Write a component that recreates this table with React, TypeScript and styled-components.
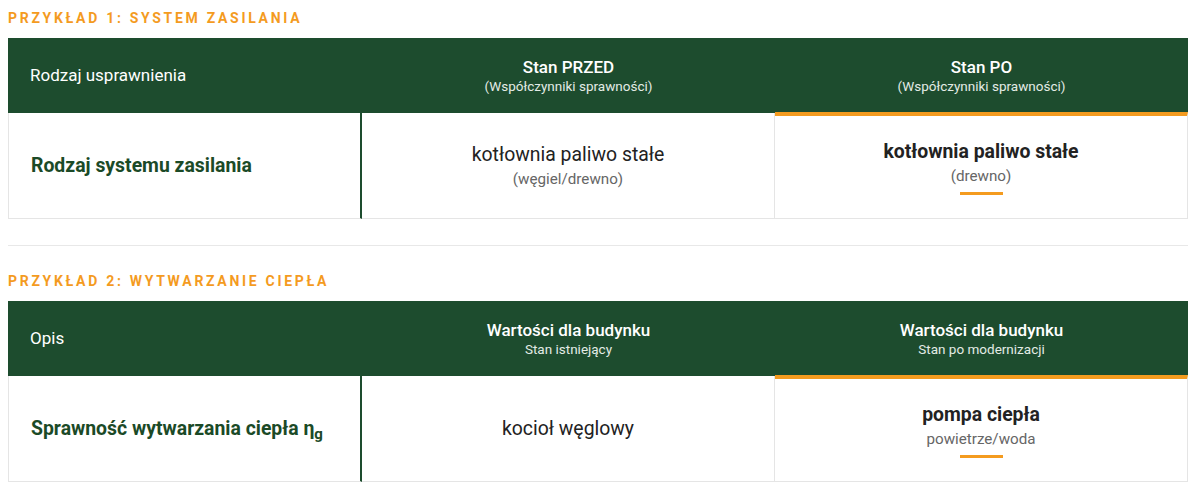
import React from 'react'
import styled, { createGlobalStyle } from 'styled-components'

const GREEN = '#1d4c2e'
const ORANGE = '#f49b1f'

const GlobalStyle = createGlobalStyle`
  html, body {
    margin: 0;
    padding: 0;
    background: #fff;
    font-family: Roboto, 'Liberation Sans', sans-serif;
  }
`

const Page = styled.div`
  width: 1180px;
  padding: 10px 12px 0 8px;
`

const Section = styled.section``

const Title = styled.h3`
  margin: 0 0 12px;
  font-size: 14px;
  line-height: 16px;
  font-weight: 700;
  letter-spacing: 2.7px;
  text-transform: uppercase;
  color: ${ORANGE};
`

const Divider = styled.hr`
  margin: 26px 0 27px;
  border: 0;
  border-top: 1px solid #e8e8e8;
`

const Table = styled.div`
  display: grid;
  grid-template-columns: 30% 35% 35%;
`

const HeadCell = styled.div<{ $align?: 'left' | 'center' }>`
  height: 75px;
  background: ${GREEN};
  color: #fff;
  display: flex;
  flex-direction: column;
  justify-content: center;
  align-items: ${p => (p.$align === 'left' ? 'flex-start' : 'center')};
  padding: ${p => (p.$align === 'left' ? '0 0 0 22px' : '0')};
  box-sizing: border-box;
`

const HeadLabel = styled.div<{ $plain?: boolean }>`
  font-size: 17px;
  line-height: 21px;
  font-weight: ${p => (p.$plain ? 400 : 500)};
`

const HeadSub = styled.div`
  font-size: 13.5px;
  line-height: 17px;
  color: #e3ebe5;
`

const BodyCell = styled.div<{ $variant: 'label' | 'before' | 'after' }>`
  height: ${p => (p.$variant === 'after' ? '107px' : '106px')};
  margin-top: ${p => (p.$variant === 'after' ? '-1px' : '0')};
  box-sizing: border-box;
  display: flex;
  flex-direction: column;
  justify-content: center;
  align-items: ${p => (p.$variant === 'label' ? 'flex-start' : 'center')};
  padding-left: ${p => (p.$variant === 'label' ? '22px' : '0')};
  border-bottom: 1px solid #e5e5e5;
  border-left: ${p => (p.$variant === 'label' ? '1px solid #e5e5e5' : '0')};
  border-right: ${p =>
    p.$variant === 'label' ? `2px solid ${GREEN}` : '1px solid #e5e5e5'};
  border-top: ${p => (p.$variant === 'after' ? `4px solid ${ORANGE}` : '0')};
`

const RowLabel = styled.div`
  font-size: 19.4px;
  line-height: 23px;
  font-weight: 700;
  color: #1b4a27;
  sub {
    font-size: 15px;
    vertical-align: -4px;
    line-height: 0;
  }
`

const Value = styled.div<{ $strong?: boolean }>`
  font-size: 19.4px;
  line-height: 23px;
  font-weight: ${p => (p.$strong ? 700 : 400)};
  color: #222;
`

const Note = styled.div`
  margin-top: 4px;
  font-size: 15.2px;
  line-height: 18px;
  color: #666;
`

const Accent = styled.span`
  display: block;
  width: 43px;
  height: 3px;
  margin-top: 7px;
  background: ${ORANGE};
`

export default function App() {
  return (
    <Page>
      <GlobalStyle />
      <Section>
        <Title>Przykład 1: System zasilania</Title>
        <Table>
          <HeadCell $align='left'>
            <HeadLabel $plain>Rodzaj usprawnienia</HeadLabel>
          </HeadCell>
          <HeadCell>
            <HeadLabel>Stan PRZED</HeadLabel>
            <HeadSub>(Współczynniki sprawności)</HeadSub>
          </HeadCell>
          <HeadCell>
            <HeadLabel>Stan PO</HeadLabel>
            <HeadSub>(Współczynniki sprawności)</HeadSub>
          </HeadCell>

          <BodyCell $variant='label'>
            <RowLabel>Rodzaj systemu zasilania</RowLabel>
          </BodyCell>
          <BodyCell $variant='before'>
            <Value>kotłownia paliwo stałe</Value>
            <Note>(węgiel/drewno)</Note>
          </BodyCell>
          <BodyCell $variant='after'>
            <Value $strong>kotłownia paliwo stałe</Value>
            <Note>(drewno)</Note>
            <Accent />
          </BodyCell>
        </Table>
      </Section>

      <Divider />

      <Section>
        <Title>Przykład 2: Wytwarzanie ciepła</Title>
        <Table>
          <HeadCell $align='left'>
            <HeadLabel $plain>Opis</HeadLabel>
          </HeadCell>
          <HeadCell>
            <HeadLabel>Wartości dla budynku</HeadLabel>
            <HeadSub>Stan istniejący</HeadSub>
          </HeadCell>
          <HeadCell>
            <HeadLabel>Wartości dla budynku</HeadLabel>
            <HeadSub>Stan po modernizacji</HeadSub>
          </HeadCell>

          <BodyCell $variant='label'>
            <RowLabel>
              Sprawność wytwarzania ciepła η<sub>g</sub>
            </RowLabel>
          </BodyCell>
          <BodyCell $variant='before'>
            <Value>kocioł węglowy</Value>
          </BodyCell>
          <BodyCell $variant='after'>
            <Value $strong>pompa ciepła</Value>
            <Note>powietrze/woda</Note>
            <Accent />
          </BodyCell>
        </Table>
      </Section>
    </Page>
  )
}
